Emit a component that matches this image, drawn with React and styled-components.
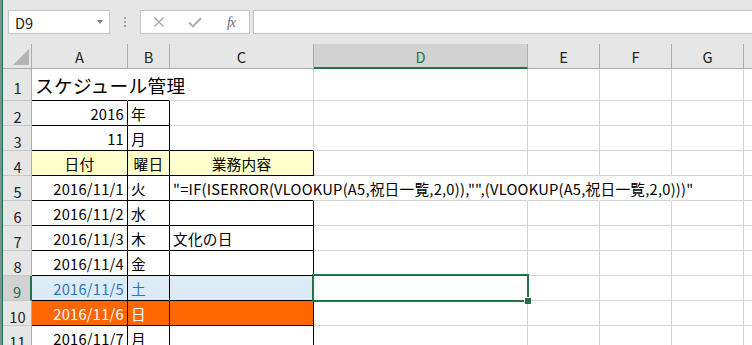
import React from 'react';
import styled, { createGlobalStyle } from 'styled-components';

const FONT = `"Noto Sans CJK JP", "Noto Sans", sans-serif`;

const Global = createGlobalStyle`
  html, body { margin: 0; padding: 0; }
  body { background: #7d8f93; font-family: ${FONT}; overflow: hidden; }
  * { box-sizing: border-box; }
`;

const Window = styled.div`
  margin-left: 2px;
  border-left: 1px solid #217346;
  width: 750px;
  height: 345px;
  background: #e6e6e6;
  display: flex;
  flex-direction: column;
  overflow: hidden;
`;

const FormulaBar = styled.div`
  height: 44px;
  flex: none;
  display: flex;
  align-items: flex-start;
  padding: 10px 0 0 5px;
`;

const NameBox = styled.div`
  width: 102px;
  height: 24px;
  flex: none;
  background: #fff;
  border: 1px solid #c6c6c6;
  display: flex;
  align-items: center;
  justify-content: space-between;
  padding: 0 6px;
  font-size: 14.5px;
  color: #222;
`;

const Caret = styled.span`
  width: 0;
  height: 0;
  border-left: 3.5px solid transparent;
  border-right: 3.5px solid transparent;
  border-top: 4px solid #808080;
`;

const Dots = styled.div`
  flex: none;
  display: flex;
  flex-direction: column;
  gap: 2px;
  margin: 7px 14px 0 14px;
`;

const Dot = styled.span`
  width: 2px;
  height: 2px;
  background: #a3a3a3;
`;

const ButtonsBox = styled.div`
  width: 110px;
  height: 24px;
  flex: none;
  background: #fff;
  border: 1px solid #c6c6c6;
  display: flex;
`;

const Slot = styled.div`
  width: 36px;
  height: 100%;
  display: flex;
  align-items: center;
  justify-content: center;
`;

const Fx = styled.span`
  font-family: "Liberation Serif", serif;
  font-style: italic;
  font-size: 14px;
  color: #6b6b6b;
  letter-spacing: -1px;
  margin-top: 1px;
`;

const FormulaInput = styled.div`
  flex: 1;
  height: 24px;
  margin-left: 3px;
  margin-right: -6px;
  background: #fff;
  border: 1px solid #c6c6c6;
`;

const Sheet = styled.div`
  flex: 1;
  display: grid;
  grid-template-columns: 29px 96px 42px 144px 214px 72px 72px 72px 72px;
  grid-template-rows: 25px 32px repeat(10, 25px);
  background: #fff;
  overflow: hidden;
  font-size: 14.67px;
`;

const Corner = styled.div`
  background: #e6e6e6;
  border-right: 1px solid #ababab;
  border-bottom: 1px solid #ababab;
  display: flex;
  align-items: flex-end;
  justify-content: flex-end;
  padding: 0 2px 3px 0;
`;

const Triangle = styled.span`
  width: 0;
  height: 0;
  border-left: 16px solid transparent;
  border-bottom: 16px solid #b4b4b4;
`;

const ColHeader = styled.div`
  background: ${p => (p.$sel ? '#d2d2d2' : '#e6e6e6')};
  color: ${p => (p.$sel ? '#217346' : '#222')};
  border-right: 1px solid #ababab;
  border-bottom: ${p => (p.$sel ? '2px solid #217346' : '1px solid #ababab')};
  display: flex;
  align-items: center;
  justify-content: center;
  padding-top: ${p => (p.$sel ? '1px' : '0')};
`;

const RowHeader = styled.div`
  background: ${p => (p.$sel ? '#d2d2d2' : '#e6e6e6')};
  color: ${p => (p.$sel ? '#217346' : '#222')};
  border-right: ${p => (p.$sel ? '2px solid #217346' : '1px solid #ababab')};
  border-bottom: 1px solid #c8c8c8;
  display: flex;
  align-items: center;
  justify-content: center;
  padding-top: 6px;
  padding-left: 1px;
`;

const Cell = styled.div`
  position: relative;
  background: ${p => p.$fill || '#fff'};
  color: ${p => p.$color || '#000'};
  border-right: 1px solid ${p => p.$right};
  border-bottom: 1px solid ${p => p.$bottom};
  display: flex;
  align-items: center;
  justify-content: ${p =>
    p.$align === 'right' ? 'flex-end' : p.$align === 'center' ? 'center' : 'flex-start'};
  padding: 0 3px 0 3px;
  min-width: 0;
  font-size: ${p => (p.$title ? '18.67px' : '14.67px')};
  letter-spacing: ${p => (p.$title ? '0.3px' : '0.25px')};
`;

const Text = styled.span`
  position: relative;
  z-index: 1;
  white-space: nowrap;
`;

const Selection = styled.div`
  position: absolute;
  top: -2px;
  left: -2px;
  right: -2px;
  bottom: -2px;
  border: 2px solid #217346;
  z-index: 2;
  pointer-events: none;
`;

const Handle = styled.span`
  position: absolute;
  right: -4px;
  bottom: -4px;
  width: 7px;
  height: 7px;
  background: #217346;
  border-left: 1px solid #fff;
  border-top: 1px solid #fff;
`;

const COLS = ['A', 'B', 'C', 'D', 'E', 'F', 'G', 'H'];
const GRID = '#d4d4d4';
const BLACK = '#000';

const days = ['火', '水', '木', '金', '土', '日', '月'];
const formula =
  '"=IF(ISERROR(VLOOKUP(A5,祝日一覧,2,0)),"",(VLOOKUP(A5,祝日一覧,2,0)))"';

const cellData = {
  A1: { t: 'スケジュール管理', title: true },
  A2: { t: '2016', al: 'right' },
  B2: { t: '年' },
  A3: { t: '11', al: 'right' },
  B3: { t: '月' },
  A4: { t: '日付', al: 'center' },
  B4: { t: '曜日', al: 'center' },
  C4: { t: '業務内容', al: 'center' },
  C5: { t: formula },
  C7: { t: '文化の日' },
};
days.forEach((d, i) => {
  cellData[`A${i + 5}`] = { t: `2016/11/${i + 1}`, al: 'right' };
  cellData[`B${i + 5}`] = { t: d };
});

const inABC = c => 'ABC'.includes(c);
const blackBottom = (c, r) => ('AB'.includes(c) && r >= 1) || (c === 'C' && r >= 3);
const blackRight = (c, r) => ('AB'.includes(c) && r >= 2) || (c === 'C' && (r === 4 || r >= 6));
const hiddenRight = (c, r) => (r === 1 && 'AB'.includes(c)) || (r === 5 && 'CDEF'.includes(c));

const fillFor = (c, r) => {
  if (!inABC(c)) return null;
  if (r === 4) return '#ffffcc';
  if (r === 9) return '#ddebf7';
  if (r === 10) return '#ff6600';
  return null;
};
const colorFor = (c, r) => {
  if (r === 9 && inABC(c)) return '#2e75b6';
  if (r === 10 && inABC(c)) return '#fff';
  return null;
};

const XIcon = () => (
  <svg width="12" height="12" viewBox="0 0 12 12">
    <path d="M1.5 1.5 L10.5 10.5 M10.5 1.5 L1.5 10.5" stroke="#a6a6a6" strokeWidth="1.3" fill="none" />
  </svg>
);

const CheckIcon = () => (
  <svg width="14" height="11" viewBox="0 0 14 11">
    <path d="M1 5.5 L5 9.5 L13 1" stroke="#b0b0b0" strokeWidth="2" fill="none" />
  </svg>
);

export default function App() {
  const rows = Array.from({ length: 11 }, (_, i) => i + 1);
  return (
    <>
      <Global />
      <Window>
        <FormulaBar>
          <NameBox>
            <span>D9</span>
            <Caret />
          </NameBox>
          <Dots>
            <Dot />
            <Dot />
            <Dot />
          </Dots>
          <ButtonsBox>
            <Slot><XIcon /></Slot>
            <Slot><CheckIcon /></Slot>
            <Slot><Fx>fx</Fx></Slot>
          </ButtonsBox>
          <FormulaInput />
        </FormulaBar>
        <Sheet>
          <Corner><Triangle /></Corner>
          {COLS.map(c => (
            <ColHeader key={c} $sel={c === 'D'}>{c === 'H' ? '' : c}</ColHeader>
          ))}
          {rows.map(r => (
            <React.Fragment key={r}>
              <RowHeader $sel={r === 9}>{r}</RowHeader>
              {COLS.map(c => {
                const d = cellData[`${c}${r}`];
                const fill = fillFor(c, r);
                const right = hiddenRight(c, r)
                  ? fill || '#fff'
                  : blackRight(c, r) ? BLACK : GRID;
                const bottom = blackBottom(c, r) ? BLACK : GRID;
                return (
                  <Cell
                    key={c}
                    $fill={fill}
                    $color={colorFor(c, r)}
                    $right={right}
                    $bottom={bottom}
                    $align={d && d.al}
                    $title={d && d.title}
                  >
                    {d && <Text>{d.t}</Text>}
                    {c === 'D' && r === 9 && (
                      <Selection><Handle /></Selection>
                    )}
                  </Cell>
                );
              })}
            </React.Fragment>
          ))}
        </Sheet>
      </Window>
    </>
  );
}
